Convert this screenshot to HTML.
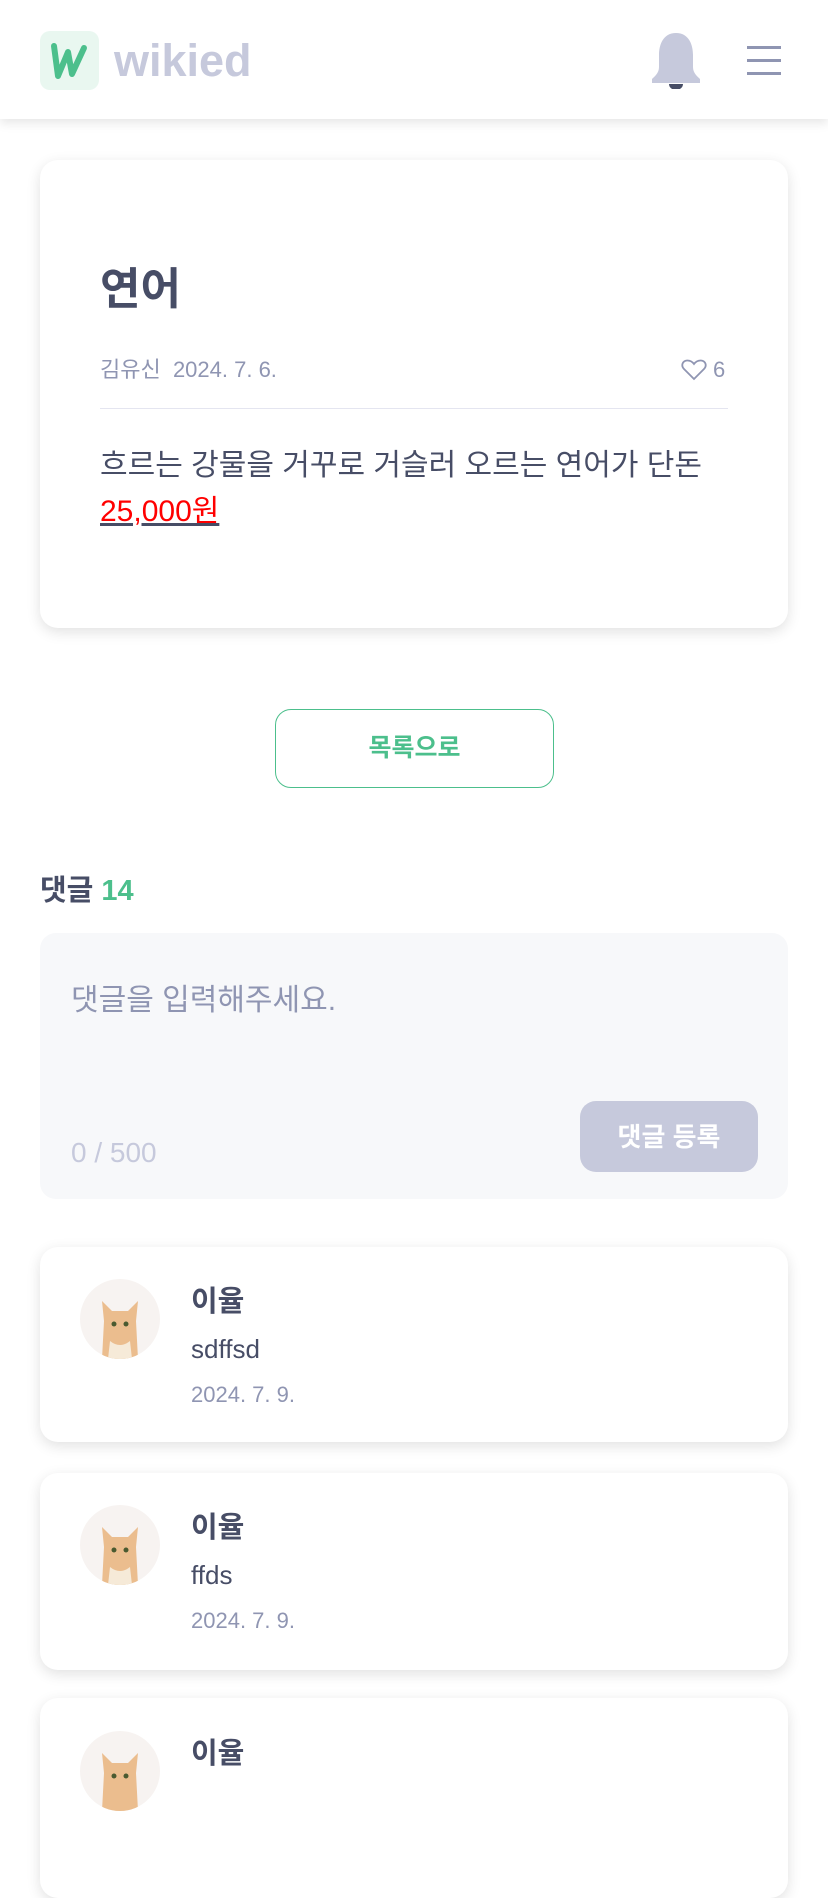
<!DOCTYPE html>
<html><head><meta charset="utf-8"><style>
*{margin:0;padding:0;box-sizing:border-box}
body{width:828px;height:1792px;overflow:hidden;background:#fff;font-family:"Liberation Sans","Noto Sans CJK KR",sans-serif;color:#474d66;position:relative}
.abs{position:absolute}
.hdr{left:0;top:0;width:828px;height:119px;background:#fff;box-shadow:0 4px 10px rgba(0,0,0,0.1)}
.card{background:#fff;border-radius:18px;box-shadow:0 4px 14px rgba(0,0,0,0.12)}
.t{white-space:nowrap;line-height:1}
.cat{width:80px;height:80px;border-radius:50%;background:#f7f3f1;overflow:hidden}
</style></head><body>
<div class="abs hdr">
  <div class="abs" style="left:40px;top:31px;width:59px;height:59px;border-radius:10px;background:#e9f7f0"></div>
  <svg class="abs" style="left:48px;top:40px" width="44" height="42" viewBox="0 0 44 42"><path d="M6 6 L10 36 L20 12 L24 34 L36 8" fill="none" stroke="#4cbf8c" stroke-width="6" stroke-linejoin="round" stroke-linecap="round"/></svg>
  <div class="abs t" style="left:114px;top:38px;font-size:45px;font-weight:bold;color:#c6c9dc">wikied</div>
  <svg class="abs" style="left:649px;top:31px" width="54" height="58" viewBox="0 0 54 58"><path d="M27 2 C14 2 10 14 10 24 L10 36 C10 42 6 45 3 48 L3 52 L51 52 L51 48 C48 45 44 42 44 36 L44 24 C44 14 40 2 27 2Z" fill="#c6c9dc"/><path d="M20 53 a7 6 0 0 0 14 0Z" fill="#474d66"/></svg>
  <div class="abs" style="left:747px;top:46px;width:34px;height:3px;background:#8f95b2"></div>
  <div class="abs" style="left:747px;top:59px;width:34px;height:3px;background:#8f95b2"></div>
  <div class="abs" style="left:747px;top:72px;width:34px;height:3px;background:#8f95b2"></div>
</div>
<div class="abs card" style="left:40px;top:160px;width:748px;height:468px"></div>
<div class="abs t" style="left:100px;top:268px;font-size:44px;font-weight:bold;color:#474d66">연어</div>
<div class="abs t" style="left:100px;top:359px;font-size:22px;color:#8f95b2">김유신&nbsp; 2024. 7. 6.</div>
<svg class="abs" style="left:681px;top:359px" width="26" height="22" viewBox="0 0 26 22"><path d="M13 20 L3 10 C0 7 1 2 6 1.5 C9 1.3 11.5 3 13 5 C14.5 3 17 1.3 20 1.5 C25 2 26 7 23 10Z" fill="none" stroke="#8f95b2" stroke-width="1.8"/></svg>
<div class="abs t" style="left:713px;top:359px;font-size:22px;color:#8f95b2">6</div>
<div class="abs" style="left:100px;top:408px;width:628px;height:1px;background:#e4e5f0"></div>
<div class="abs t" style="left:100px;top:451px;font-size:30px;color:#474d66">흐르는 강물을 거꾸로 거슬러 오르는 연어가 단돈</div>
<div class="abs t" style="left:100px;top:497px;font-size:30px;color:#ff0000;text-decoration:underline;text-decoration-color:#474d66">25,000원</div>
<div class="abs" style="left:275px;top:709px;width:279px;height:79px;border:1px solid #4cbf8c;border-radius:16px"></div>
<div class="abs t" style="left:275px;top:736px;width:279px;text-align:center;font-size:25px;font-weight:bold;color:#4cbf8c">목록으로</div>
<div class="abs t" style="left:40px;top:877px;font-size:29px;font-weight:bold;color:#474d66">댓글 <span style="color:#4cbf8c">14</span></div>
<div class="abs" style="left:40px;top:933px;width:748px;height:266px;background:#f7f8fa;border-radius:16px"></div>
<div class="abs t" style="left:71px;top:986px;font-size:30px;color:#8f95b2">댓글을 입력해주세요.</div>
<div class="abs t" style="left:71px;top:1139px;font-size:28px;color:#c6c9dc">0 / 500</div>
<div class="abs" style="left:580px;top:1101px;width:178px;height:71px;background:#c6c9dc;border-radius:16px"></div>
<div class="abs t" style="left:580px;top:1124px;width:178px;text-align:center;font-size:26px;font-weight:bold;color:#fff">댓글 등록</div>

<div class="abs card" style="left:40px;top:1247px;width:748px;height:195px"></div>
<div class="abs card" style="left:40px;top:1473px;width:748px;height:197px"></div>
<div class="abs card" style="left:40px;top:1698px;width:748px;height:200px"></div>

<div class="abs cat" style="left:80px;top:1279px"><svg width="80" height="80" viewBox="0 0 80 80"><path d="M22 80 L24 42 L22 22 L32 32 L48 32 L58 22 L56 42 L58 80Z" fill="#ebbd8e"/><circle cx="34" cy="45" r="2.5" fill="#4a5a30"/><circle cx="46" cy="45" r="2.5" fill="#4a5a30"/><path d="M30 62 Q40 70 50 62 L52 80 L28 80Z" fill="#f6ead8"/></svg></div>
<div class="abs t" style="left:191px;top:1288px;font-size:29px;font-weight:bold;color:#474d66">이율</div>
<div class="abs t" style="left:191px;top:1336px;font-size:26px;color:#474d66">sdffsd</div>
<div class="abs t" style="left:191px;top:1384px;font-size:22px;color:#8f95b2">2024. 7. 9.</div>

<div class="abs cat" style="left:80px;top:1505px"><svg width="80" height="80" viewBox="0 0 80 80"><path d="M22 80 L24 42 L22 22 L32 32 L48 32 L58 22 L56 42 L58 80Z" fill="#ebbd8e"/><circle cx="34" cy="45" r="2.5" fill="#4a5a30"/><circle cx="46" cy="45" r="2.5" fill="#4a5a30"/><path d="M30 62 Q40 70 50 62 L52 80 L28 80Z" fill="#f6ead8"/></svg></div>
<div class="abs t" style="left:191px;top:1514px;font-size:29px;font-weight:bold;color:#474d66">이율</div>
<div class="abs t" style="left:191px;top:1562px;font-size:26px;color:#474d66">ffds</div>
<div class="abs t" style="left:191px;top:1610px;font-size:22px;color:#8f95b2">2024. 7. 9.</div>

<div class="abs cat" style="left:80px;top:1731px"><svg width="80" height="80" viewBox="0 0 80 80"><path d="M22 80 L24 42 L22 22 L32 32 L48 32 L58 22 L56 42 L58 80Z" fill="#ebbd8e"/><circle cx="34" cy="45" r="2.5" fill="#4a5a30"/><circle cx="46" cy="45" r="2.5" fill="#4a5a30"/></svg></div>
<div class="abs t" style="left:191px;top:1740px;font-size:29px;font-weight:bold;color:#474d66">이율</div>
</body></html>
